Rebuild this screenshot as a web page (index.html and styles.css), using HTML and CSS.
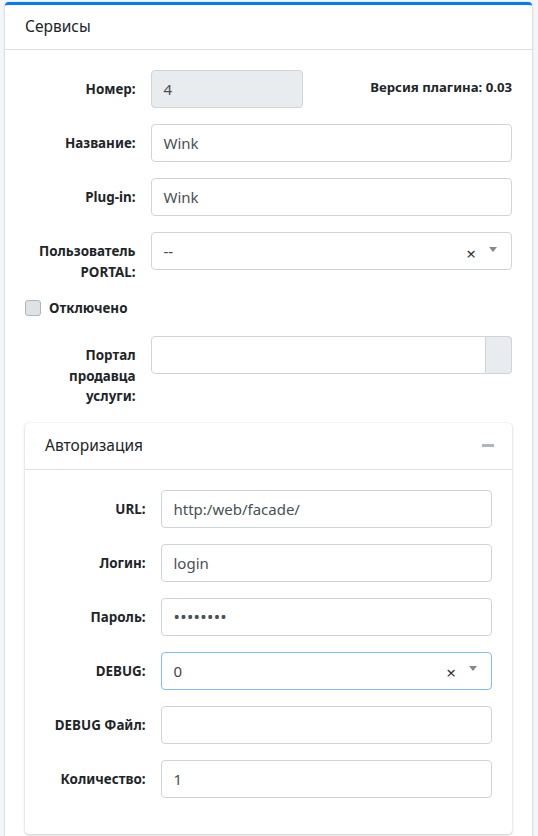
FILE: index.html
```html
<!DOCTYPE html>
<html lang="ru">
<head>
<meta charset="utf-8">
<title>Сервисы</title>
<link rel="stylesheet" href="styles.css">
</head>
<body>
<div class="card card-primary">
  <div class="card-header">Сервисы</div>
  <div class="card-body">
    <div class="form-row">
      <label class="lbl">Номер:</label>
      <div class="ctl-narrow"><div class="input readonly">4</div></div>
      <div class="version">Версия плагина: 0.03</div>
    </div>
    <div class="form-row">
      <label class="lbl">Название:</label>
      <div class="ctl"><div class="input">Wink</div></div>
    </div>
    <div class="form-row">
      <label class="lbl">Plug-in:</label>
      <div class="ctl"><div class="input">Wink</div></div>
    </div>
    <div class="form-row">
      <label class="lbl">Пользователь PORTAL:</label>
      <div class="ctl">
        <div class="input select"><span class="sel-text">--</span><span class="sel-clear">×</span><span class="sel-arrow"></span></div>
      </div>
    </div>
    <div class="check-wrap">
      <div class="check-row">
        <span class="checkbox"></span>
        <span class="check-label">Отключено</span>
      </div>
    </div>
    <div class="form-row">
      <label class="lbl">Портал продавца услуги:</label>
      <div class="ctl">
        <div class="input-group"><div class="input grow"></div><div class="append"></div></div>
      </div>
    </div>

    <div class="card inner">
      <div class="card-header inner-header"><span>Авторизация</span><span class="minus"></span></div>
      <div class="card-body">
        <div class="form-row">
          <label class="lbl">URL:</label>
          <div class="ctl"><div class="input">http:/web/facade/</div></div>
        </div>
        <div class="form-row">
          <label class="lbl">Логин:</label>
          <div class="ctl"><div class="input">login</div></div>
        </div>
        <div class="form-row">
          <label class="lbl">Пароль:</label>
          <div class="ctl"><div class="input pwd">••••••••</div></div>
        </div>
        <div class="form-row">
          <label class="lbl">DEBUG:</label>
          <div class="ctl">
            <div class="input select focus"><span class="sel-text">0</span><span class="sel-clear">×</span><span class="sel-arrow"></span></div>
          </div>
        </div>
        <div class="form-row">
          <label class="lbl">DEBUG Файл:</label>
          <div class="ctl"><div class="input"></div></div>
        </div>
        <div class="form-row">
          <label class="lbl">Количество:</label>
          <div class="ctl"><div class="input">1</div></div>
        </div>
      </div>
    </div>
  </div>
</div>
</body>
</html>
```
FILE: styles.css
```css
* { box-sizing: border-box; }
html, body { height: 100%; }
body {
  margin: 0;
  padding: 2px 5px 0 5px;
  background: #f4f6f9;
  font-family: "Noto Sans", "Open Sans", "DejaVu Sans", sans-serif;
  color: #212529;
  font-size: 16px;
  line-height: 1.5;
  overflow: hidden;
}
.card {
  background: #fff;
  border-radius: 4px;
  box-shadow: 0 0 1px rgba(0,0,0,.125), 0 1px 3px rgba(0,0,0,.2);
}
.card-primary {
  border-top: 3px solid #007bff;
  width: 527px;
}
.card-header {
  padding: 11px 20px 12px;
  border-bottom: 1px solid rgba(0,0,0,.125);
  font-size: 15.5px;
  line-height: 21px;
}
.card-body {
  padding: 20px;
}
.form-row {
  display: flex;
  gap: 15px;
  margin-bottom: 16px;
  align-items: flex-start;
}
.lbl {
  flex: 0 0 calc(25% - 11.25px);
  text-align: right;
  font-weight: 700;
  font-size: 13.4px;
  line-height: 20.5px;
  padding-top: 9px;
}
.ctl { flex: 1; min-width: 0; }
.ctl-narrow { flex: 0 0 calc(33.333% - 10px); }
.version {
  flex: 1;
  text-align: right;
  font-weight: 700;
  font-size: 13.2px;
  padding-top: 8px;
}
.input {
  height: 38px;
  border: 1px solid #ced4da;
  border-radius: 4px;
  padding: 6px 12px;
  font-size: 15px;
  line-height: 24px;
  color: #495057;
  background: #fff;
}
.input.readonly { background: #e9ecef; }
.input.pwd { font-size: 17px; letter-spacing: 0.3px; }
.select {
  display: flex;
  align-items: center;
  padding-right: 14px;
}
.select.focus { border-color: #80bdff; }
.sel-text { flex: 1; color: #444; }
.sel-clear {
  font-size: 17px;
  color: #333;
  margin-right: 13px;
  font-weight: 400;
  line-height: 1;
  padding-top: 4px;
}
.sel-arrow {
  width: 0; height: 0;
  border-left: 4px solid transparent;
  border-right: 4px solid transparent;
  border-top: 5px solid #888;
  margin-top: -4px;
}
.check-wrap {
  padding-top: 2px;
  margin-bottom: 20px;
}
.check-row {
  display: flex;
  align-items: center;
  gap: 8px;
  height: 16px;
}
.checkbox {
  width: 16px; height: 16px;
  border: 1px solid #adb5bd;
  background: #dee2e6;
  border-radius: 3px;
}
.check-label { font-weight: 700; font-size: 13.4px; }
.input-group { display: flex; height: 38px; }
.input.grow { flex: 1; border-radius: 4px 0 0 4px; }
.append {
  width: 26px;
  border: 1px solid #ced4da;
  border-left: 0;
  border-radius: 0 4px 4px 0;
  background: #e9ecef;
}
.inner { margin-top: 12px; }
.inner-header {
  display: flex;
  align-items: center;
  justify-content: space-between;
  padding: 12px 18px 13px 20px;
}
.minus {
  width: 12px; height: 3px;
  background: #adb5bd;
}
```
